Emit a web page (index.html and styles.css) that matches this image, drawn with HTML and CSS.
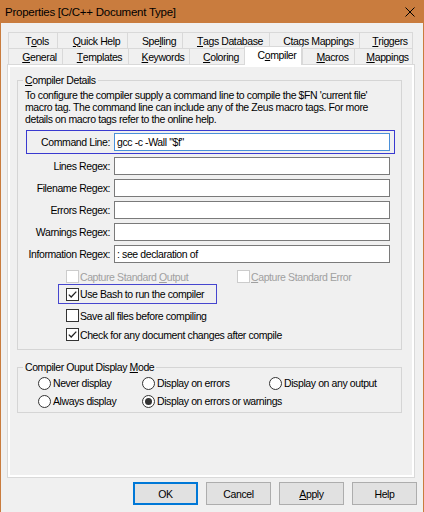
FILE: index.html
```html
<!DOCTYPE html>
<html>
<head>
<meta charset="utf-8">
<title>Properties</title>
<link rel="stylesheet" href="styles.css">
</head>
<body>
<div class="window">
  <div class="titlebar">
    <span class="title">Properties [C/C++ Document Type]</span>
    <svg class="close" width="10" height="10" viewBox="0 0 10 10"><path d="M0.5 0.5L9.5 9.5M9.5 0.5L0.5 9.5" stroke="#000" stroke-width="1" fill="none"/></svg>
  </div>
  <div class="client">
    <div class="tabs">
      <div class="tabrow row1">
        <div class="tab">T<u>o</u>ols</div>
        <div class="tab"><u>Q</u>uick Help</div>
        <div class="tab">Spe<u>l</u>ling</div>
        <div class="tab"><u>T</u>ags Database</div>
        <div class="tab">C<u>t</u>ags Mappings</div>
        <div class="tab"><u>T</u>riggers</div>
      </div>
      <div class="tabrow row2">
        <div class="tab"><u>G</u>eneral</div>
        <div class="tab"><u>T</u>emplates</div>
        <div class="tab"><u>K</u>eywords</div>
        <div class="tab"><u>C</u>oloring</div>
        <div class="tab sel">C<u>o</u>mpiler</div>
        <div class="tab"><u>M</u>acros</div>
        <div class="tab"><u>M</u>appings</div>
      </div>
    </div>
    <div class="panel">
      <div class="page">
        <fieldset class="group details">
          <legend><u>C</u>ompiler Details</legend>
          <p class="desc">To configure the compiler supply a command line to compile the $FN 'current file'<br>macro tag. The command line can include any of the Zeus macro tags. For more<br>details on macro tags refer to the online help.</p>
          <div class="focusbox">
            <span class="lbl">Command Line:</span>
            <div class="input focused">gcc -c -Wall "$f"</div>
          </div>
          <div class="field first"><span class="lbl">Lines Regex:</span><div class="input"></div></div>
          <div class="field"><span class="lbl">Filename Regex:</span><div class="input"></div></div>
          <div class="field"><span class="lbl">Errors Regex:</span><div class="input"></div></div>
          <div class="field"><span class="lbl">Warnings Regex:</span><div class="input"></div></div>
          <div class="field"><span class="lbl">Information Regex:</span><div class="input">: see declaration of</div></div>
          <div class="checkrow capture">
            <div class="chk wide"><span class="cb dis"></span><span class="dis">Capture Standard <u>O</u>utput</span></div>
            <div class="chk"><span class="cb dis"></span><span class="dis"><u>C</u>apture Standard Error</span></div>
          </div>
          <div class="bashbox">
            <div class="chk"><span class="cb"><svg width="11" height="11" viewBox="0 0 11 11"><path d="M1.8 5.6L4.2 8L9.3 2.6" stroke="#222" stroke-width="1.3" fill="none"/></svg></span><span>Use Bash to run the compiler</span></div>
          </div>
          <div class="checkrow save">
            <div class="chk"><span class="cb"></span><span>Save all files before compiling</span></div>
          </div>
          <div class="checkrow check">
            <div class="chk"><span class="cb"><svg width="11" height="11" viewBox="0 0 11 11"><path d="M1.8 5.6L4.2 8L9.3 2.6" stroke="#222" stroke-width="1.3" fill="none"/></svg></span><span>Check for any document changes after compile</span></div>
          </div>
        </fieldset>
        <fieldset class="group mode">
          <legend>Compiler Ouput Display <u>M</u>ode</legend>
          <div class="radios">
            <div class="ri"><span class="rb"></span><span>Never display</span></div>
            <div class="ri"><span class="rb"></span><span>Display on errors</span></div>
            <div class="ri"><span class="rb"></span><span>Display on any output</span></div>
            <div class="ri"><span class="rb"></span><span>Always display</span></div>
            <div class="ri"><span class="rb on"></span><span>Display on errors or warnings</span></div>
          </div>
        </fieldset>
      </div>
    </div>
    <div class="buttons">
      <button class="btn default">OK</button>
      <button class="btn">Cancel</button>
      <button class="btn"><u>A</u>pply</button>
      <button class="btn">Help</button>
    </div>
  </div>
</div>
</body>
</html>
```
FILE: styles.css
```css
* { box-sizing: border-box; }
html, body { margin: 0; padding: 0; }
body {
  width: 424px;
  height: 512px;
  overflow: hidden;
  background: #f0f0f0;
  font-family: "Liberation Sans", Arial, sans-serif;
  font-size: 10.5px;
  letter-spacing: -0.4px;
  color: #000;
}
u { text-decoration: underline; text-underline-offset: 1px; }

.window {
  width: 424px;
  height: 512px;
  border-left: 1px solid #c97c3e;
  border-right: 1px solid #c97c3e;
  background: #f0f0f0;
  display: flex;
  flex-direction: column;
}
.titlebar {
  height: 23px;
  flex: none;
  background: #c97c3e;
  display: flex;
  align-items: center;
  justify-content: space-between;
  padding: 0 8px 0 4px;
}
.title {
  font-size: 11.5px;
  letter-spacing: -0.25px;
  color: #000;
}
.close { display: block; }

.client { flex: 1; display: flex; flex-direction: column; }

.tabs { margin: 9px 0 0 7px; width: 405px; }
.tabrow { display: grid; grid-template-rows: 16px; align-items: end; }
.row1 { grid-template-columns: 49px 70px 55px 87px 90px 54px; }
.row2 { grid-template-columns: 54px 66px 61px 55px 58px 52px 59px; }
.tab {
  height: 16px;
  border: 1px solid #d9d9d9;
  border-bottom: none;
  border-right: none;
  background: #f0f0f0;
  display: flex;
  align-items: center;
  justify-content: center;
  padding-left: 8px;
  white-space: nowrap;
}
.tab:last-child { border-right: 1px solid #d9d9d9; }
.tab.sel {
  height: 19px;
  margin-bottom: -1px;
  background: #fff;
  border-right: 1px solid #d9d9d9;
  position: relative;
  z-index: 1;
  padding-bottom: 3px;
}

.panel {
  margin-left: 6px;
  width: 408px;
  height: 414px;
  border: 1px solid #d9d9d9;
  background: #fff;
  padding: 2px;
  flex: none;
}
.page {
  height: 100%;
  background: #f0f0f0;
  padding-top: 7px;
}

.group {
  margin: 0 10px 0 7px;
  padding: 2px 7px 8px 7px;
  border: 1px solid #d5d5d5;
  min-width: 0;
}
.group legend {
  padding: 0 2px;
  margin-left: -2px;
  line-height: 13px;
}
.mode { margin-top: 11px; padding-bottom: 4px; }

.desc { margin: 0; line-height: 12px; white-space: nowrap; }

.focusbox {
  margin: 5px 0 0 1px;
  width: 369px;
  height: 24px;
  border: 1px solid #3a3ad0;
  display: flex;
  align-items: center;
  padding-right: 4px;
}
.focusbox .lbl { width: 83px; }
.field { display: flex; align-items: center; height: 18px; margin-top: 4px; }
.field.first { margin-top: 3px; }
.lbl {
  width: 85px;
  flex: none;
  text-align: right;
  margin-right: 4px;
  white-space: nowrap;
}
.input {
  width: 276px;
  height: 18px;
  flex: none;
  border: 1px solid #7a7a7a;
  background: #fff;
  padding-left: 2px;
  line-height: 16px;
  white-space: nowrap;
}
.input.focused { border-color: #4a90d9; }

.checkrow { display: flex; align-items: center; height: 13px; margin-left: 41px; }
.capture { margin-top: 7px; }
.save { margin-top: 5px; }
.check { margin-top: 6px; }
.chk { display: flex; align-items: center; white-space: nowrap; }
.chk.wide { width: 171px; }
.cb {
  width: 13px;
  height: 13px;
  flex: none;
  border: 1px solid #333;
  background: #fff;
  margin-right: 1px;
  display: flex;
  align-items: center;
  justify-content: center;
}
.cb.dis { border-color: #cccccc; }
.dis { color: #a0a0a0; }
.bashbox {
  margin: 1px 0 0 33px;
  width: 159px;
  height: 20px;
  border: 1px solid #4646cf;
  padding-left: 7px;
  display: flex;
  align-items: center;
}

.radios {
  display: grid;
  grid-template-columns: 104px 127px auto;
  row-gap: 4px;
  margin-left: 13px;
}
.ri { display: flex; align-items: center; height: 14px; white-space: nowrap; }
.rb {
  width: 13px;
  height: 13px;
  flex: none;
  border: 1px solid #333;
  border-radius: 50%;
  background: #fff;
  margin-right: 2px;
  display: flex;
  align-items: center;
  justify-content: center;
}
.rb.on::after {
  content: "";
  width: 7px;
  height: 7px;
  border-radius: 50%;
  background: #333;
}

.buttons {
  display: flex;
  justify-content: flex-end;
  gap: 8px;
  padding-right: 6px;
  margin-top: 4px;
}
.btn {
  width: 65px;
  height: 23px;
  border: 1px solid #adadad;
  background: #e1e1e1;
  font: inherit;
  letter-spacing: inherit;
  color: #000;
  padding: 0;
  display: flex;
  align-items: center;
  justify-content: center;
}
.btn.default { border-color: #0078d7; box-shadow: inset 0 0 0 1px #0078d7; }
```
